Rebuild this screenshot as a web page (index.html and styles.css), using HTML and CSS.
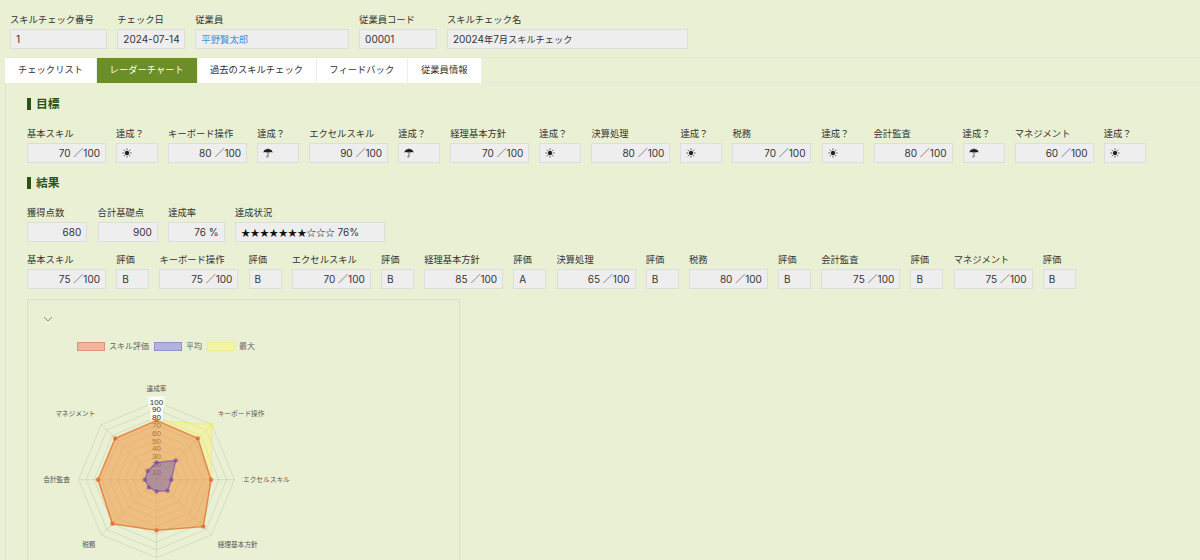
FILE: index.html
```html
<!DOCTYPE html>
<html lang="ja">
<head>
    <meta charset="UTF-8">
    <meta name="viewport" content="width=device-width, initial-scale=1.0">
    <title>スキルチェック</title>
    <link rel="stylesheet" href="styles.css">
</head>
<body>
    <div class="row header">
        <div class="field number"><label>スキルチェック番号</label><div class="value">1</div></div>
        <div class="field date"><label>チェック日</label><div class="value">2024-07-14</div></div>
        <div class="field employee"><label>従業員</label><div class="value"><a>平野賢太郎</a></div></div>
        <div class="field code"><label>従業員コード</label><div class="value">00001</div></div>
        <div class="field name"><label>スキルチェック名</label><div class="value">20024<span class="ja">年</span>7<span class="ja">月スキルチェック</span></div></div>
    </div>

    <div class="tabs">
        <div class="tab list">チェックリスト</div>
        <div class="tab radar active">レーダーチャート</div>
        <div class="tab history">過去のスキルチェック</div>
        <div class="tab feedback">フィードバック</div>
        <div class="tab info">従業員情報</div>
    </div>

    <div class="content">
        <h2>目標</h2>
        <div class="row goals" id="goals"></div>

        <h2 class="second">結果</h2>
        <div class="row totals">
            <div class="field points"><label>獲得点数</label><div class="value right">680</div></div>
            <div class="field points"><label>合計基礎点</label><div class="value right">900</div></div>
            <div class="field rate"><label>達成率</label><div class="value right">76 %</div></div>
            <div class="field status"><label>達成状況</label><div class="value"><span class="stars">★★★★★★★☆☆☆</span> 76%</div></div>
        </div>
        <div class="row results" id="results"></div>

        <div class="panel">
            <svg class="chevron" viewBox="0 0 10 6"><path d="M1 1l4 4 4-4"/></svg>
            <div class="legend">
                <span class="box skill"></span><span class="legend-text">スキル評価</span>
                <span class="box average"></span><span class="legend-text">平均</span>
                <span class="box max"></span><span class="legend-text">最大</span>
            </div>
            <svg class="chart" id="chart" viewBox="0 0 260 200"></svg>
        </div>
    </div>

    <script>
        const skills = ["基本スキル", "キーボード操作", "エクセルスキル", "経理基本方針", "決算処理", "税務", "会計監査", "マネジメント"];
        const goals = [70, 80, 90, 70, 80, 70, 80, 60];
        const marks = ["☀", "☂", "☂", "☀", "☀", "☀", "☂", "☀"];
        const scores = [75, 75, 70, 85, 65, 80, 75, 75];
        const grades = ["B", "B", "B", "A", "B", "B", "B", "B"];

        const icons = {
            "☀": '<svg class="mark" viewBox="0 0 10 10"><circle cx="5" cy="5" r="2.2"/><path d="M5 .4v1.7M5 7.9v1.7M.4 5h1.7M7.9 5h1.7M1.7 1.7l1.2 1.2M7.1 7.1l1.2 1.2M8.3 1.7l-1.2 1.2M2.9 7.1l-1.2 1.2"/></svg>',
            "☂": '<svg class="mark" viewBox="0 0 10 10"><path class="cover" d="M.4 4.4C.8 2 2.6 1 5 1s4.2 1 4.6 3.4L8 3.9 6.500 4.400 5 3.900 3.500 4.400 2 3.900z"/><path d="M5 .4v8c0 1.100-1.500 1.100-1.500.1"/></svg>'
        };

        function field(cls, label, value, right) {
            return `<div class="field ${cls}"><label>${label}</label><div class="value${right ? " right" : ""}">${value}</div></div>`;
        }

        document.getElementById("goals").innerHTML = skills.map((s, i) =>
            field("score", s, goals[i] + " ／100", true) + field("done", "達成？", icons[marks[i]])).join("");
        document.getElementById("results").innerHTML = skills.map((s, i) =>
            field("score", s, scores[i] + " ／100", true) + field("grade", "評価", grades[i])).join("");

        // radar chart
        const cx = 120.5, cy = 101.7, radius = 78;

        function point(i, value) {
            const a = Math.PI / 4 * i;
            return [cx + Math.sin(a) * radius * value / 100, cy - Math.cos(a) * radius * value / 100];
        }

        function polygon(cls, values) {
            return `<polygon class="${cls}" points="${values.map((v, i) => point(i, v).join(",")).join(" ")}"/>`;
        }

        function series(cls, values) {
            return polygon(cls, values) + values.map((v, i) => {
                const [x, y] = point(i, v);
                return `<circle class="${cls}" cx="${x}" cy="${y}" r="1.5"/>`;
            }).join("");
        }

        let svg = "";
        for (let v = 10; v <= 100; v += 10) svg += polygon("grid", Array(8).fill(v));
        for (let i = 0; i < 8; i++) {
            const [x, y] = point(i, 100);
            svg += `<line class="grid" x1="${cx}" y1="${cy}" x2="${x}" y2="${y}"/>`;
        }
        for (let v = 10; v <= 100; v += 10) {
            const y = cy - radius * v / 100;
            const w = v === 100 ? 16 : 12;
            if (v >= 80) {
                svg += `<rect class="backdrop" x="${cx - w / 2}" y="${y - 5.3}" width="${w}" height="${v === 80 ? 8.5 : 10.6}"/>`;
            }
            svg += `<text class="tick" x="${cx}" y="${y + 2.8}">${v}</text>`;
        }
        svg += series("max", [76, 100, 70, 85, 65, 80, 75, 75]);
        svg += series("skill", [76, 75, 70, 85, 65, 80, 75, 75]);
        svg += series("average", [22, 35, 19, 20, 15, 14, 15, 16]);

        const labels = [
            ["達成率", 120.5, 13.3, "middle"], ["キーボード操作", 181.7, 38.2, "start"],
            ["エクセルスキル", 207, 104.2, "start"], ["経理基本方針", 181.7, 169.3, "start"],
            ["税務", 59.5, 169.3, "end"], ["会計監査", 34, 104.2, "end"], ["マネジメント", 59.3, 38.2, "end"]
        ];
        labels.forEach(([t, x, y, anchor]) => {
            svg += `<text class="label" x="${x}" y="${y}" text-anchor="${anchor}">${t}</text>`;
        });
        document.getElementById("chart").innerHTML = svg;
    </script>
</body>
</html>
```
FILE: styles.css
```css
* {
    box-sizing: border-box;
}

body {
    margin: 0;
    height: 560px;
    overflow: hidden;
    background-color: #eaf0d3;
    color: #333;
    font-family: Inter, "Noto Sans CJK JP", sans-serif;
    font-size: 9.3px;
}

.row {
    display: flex;
}

.header {
    padding: 13px 0 0 10px;
    gap: 10.3px;
    height: 57px;
}

.field {
    flex: none;
}

.field label {
    display: block;
    height: 16px;
    line-height: 13px;
    white-space: nowrap;
}

.value {
    height: 20px;
    padding: 0 5px;
    border: 1px solid #ddd;
    background-color: #eee;
    font-size: 10px;
    line-height: 18px;
    white-space: nowrap;
}

.right {
    text-align: right;
}

.value a {
    color: #4a90d9;
    font-size: 9.4px;
}

.ja {
    font-size: 9.2px;
}

.number { width: 97px; }
.date { width: 67.7px; }
.employee { width: 153.5px; }
.code { width: 77.5px; }
.name { width: 241px; }

.tabs {
    display: flex;
    height: 26px;
    margin-left: 5px;
    border-top: 1px solid #e3e9d4;
    border-bottom: 1px solid #e5ebd8;
}

.tab {
    height: 25px;
    border-right: 1px solid #eee;
    background-color: #fff;
    line-height: 24px;
    text-align: center;
}

.tab.active {
    background-color: #6b8e28;
    color: #fff;
}

.list { width: 92px; }
.radar { width: 100.5px; }
.history { width: 119px; }
.feedback { width: 91.5px; }
.info { width: 73.5px; }

.content {
    height: 477px;
    margin-left: 5px;
    padding: 14px 0 0 21px;
    border-left: 1px solid #e0e5d0;
}

h2 {
    display: flex;
    align-items: center;
    height: 14px;
    margin: 0 0 16px;
    color: #2d5016;
    font-size: 11.8px;
    line-height: 14px;
}

h2::before {
    content: "";
    width: 4px;
    height: 12px;
    margin-right: 5px;
    background-color: #2d5016;
}

h2.second {
    margin: 13px 0 16px;
}

.goals {
    gap: 10.05px;
}

.score { width: 79px; }
.done { width: 42px; }
.grade { width: 33px; }

.totals {
    gap: 10.3px;
    margin-bottom: 11px;
}

.points { width: 60.3px; }
.rate { width: 56.5px; }
.status { width: 149.7px; }

.stars {
    color: #111;
    font-family: "Noto Sans CJK JP", sans-serif;
    font-size: 9.4px;
}

.results {
    gap: 10.2px;
}

.mark {
    display: block;
    width: 10px;
    height: 10px;
    margin-top: 4px;
    fill: #222;
}

.mark path {
    fill: none;
    stroke: #222;
    stroke-width: 0.7;
}

.mark .cover {
    fill: #222;
    stroke: none;
}

.panel {
    width: 433px;
    height: 261px;
    margin-top: 10px;
    padding: 16px 0 0 15px;
    border: 1px solid #dbe0ca;
    border-bottom: none;
    overflow: hidden;
}

.chevron {
    display: block;
    width: 10px;
    height: 6px;
    fill: none;
    stroke: #888;
    stroke-width: 1;
}

.legend {
    display: flex;
    align-items: center;
    height: 12px;
    margin: 18px 0 0 34px;
    color: #666;
    font-size: 8px;
    line-height: 12px;
}

.box {
    width: 28px;
    height: 9px;
    margin-right: 4px;
    border: 1.5px solid;
}

.legend-text {
    margin-right: 5px;
}

.box.skill {
    background-color: #eeb79a;
    border-color: #df937a;
}

.box.average {
    background-color: #b1b3da;
    border-color: #8f90d2;
}

.box.max {
    background-color: #f2f3a3;
    border-color: #f1ed91;
}

.chart {
    display: block;
    width: 260px;
    height: 200px;
    margin: 26px 0 0 -7px;
}

.chart .grid {
    fill: none;
    stroke: rgba(0, 0, 0, 0.12);
    stroke-width: 0.7;
}

.backdrop {
    fill: rgba(255, 255, 255, 0.75);
}

.tick {
    fill: #333;
    font-family: "Liberation Sans", sans-serif;
    font-size: 8px;
    text-anchor: middle;
}

.label {
    fill: #555;
    font-size: 6.7px;
}

.chart .skill {
    fill: rgba(236, 98, 60, 0.37);
    stroke: rgba(217, 84, 43, 0.6);
    stroke-width: 1.4;
}

.chart .average {
    fill: rgba(90, 80, 190, 0.4);
    stroke: rgba(100, 60, 170, 0.5);
    stroke-width: 1.4;
}

.chart .max {
    fill: rgba(246, 246, 110, 0.42);
    stroke: rgba(243, 236, 100, 0.6);
    stroke-width: 1.4;
}
```
